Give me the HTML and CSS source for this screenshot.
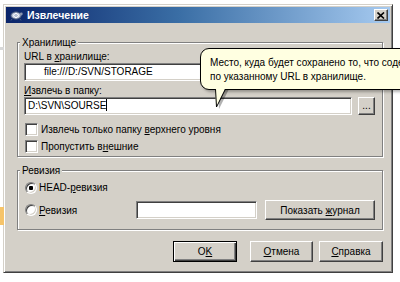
FILE: index.html
```html
<!DOCTYPE html>
<html lang="ru">
<head>
    <meta charset="UTF-8">
    <title>Извлечение</title>
    <link rel="stylesheet" href="styles.css">
</head>
<body>
    <div class="desk-line"></div>
    <div class="desk-orange"></div>

    <div class="window">
        <div class="titlebar">
            <svg class="app-icon" width="13" height="12" viewBox="0 0 13 12">
                <ellipse cx="6" cy="6.5" rx="5" ry="3.6" fill="#b8c2d6" stroke="#4a5a7a" stroke-width="1"/>
                <path d="M3 6.5 L6 4 L9 6.5 L6 9 Z" fill="none" stroke="#ffffff" stroke-width="1"/>
                <circle cx="11.3" cy="5" r="1.4" fill="#8a96b0"/>
                <path d="M2 10 L1 11.5 M10 10 L11 11.5" stroke="#4a5a7a" stroke-width="1"/>
            </svg>
            <span class="title">Извлечение</span>
            <span class="close-btn">
                <svg width="8" height="7" viewBox="0 0 8 7">
                    <path d="M0.5 0.5 L7 6.5 M7 0.5 L0.5 6.5" stroke="#000" stroke-width="1.6"/>
                </svg>
            </span>
        </div>

        <div class="dialog">
            <div class="group group-repo">
                <span class="caption">Хранилище</span>
                <div class="label">URL в <u>х</u>ранилище:</div>
                <div class="field url-field">file:///D:/SVN/STORAGE</div>
                <div class="label label-path"><u>И</u>звлечь в папку:</div>
                <div class="path-row">
                    <div class="field path-field">D:\SVN\SOURSE<span class="caret"></span></div>
                    <div class="btn browse-btn"><span>...</span></div>
                </div>
                <div class="check-row check-first">
                    <span class="checkbox"></span>
                    <span>Извлечь только папку <u>в</u>ерхнего уровня</span>
                </div>
                <div class="check-row">
                    <span class="checkbox"></span>
                    <span>Пропустить в<u>н</u>ешние</span>
                </div>
            </div>

            <div class="group group-rev">
                <span class="caption">Ревизия</span>
                <div class="radio-row">
                    <span class="radio checked"></span>
                    <span>HEAD-<u>р</u>евизия</span>
                </div>
                <div class="rev-row">
                    <div class="rev-label">
                        <span class="radio"></span>
                        <span><u>Р</u>евизия</span>
                    </div>
                    <div class="field rev-field"></div>
                    <div class="btn log-btn"><span>Показать <u>ж</u>урнал</span></div>
                </div>
            </div>

            <div class="buttons">
                <div class="btn btn-default"><span>O<u>K</u></span></div>
                <div class="btn btn-cancel"><span><u>О</u>тмена</span></div>
                <div class="btn btn-help"><span><u>С</u>правка</span></div>
            </div>
        </div>
    </div>

    <div class="balloon">
        Место, куда будет сохранено то, что содержится<br>
        по указанному URL в хранилище.
        <svg class="balloon-tail" width="18" height="22" viewBox="0 0 18 22">
            <polygon points="4,0 5,20 15,0" fill="rgba(0,0,0,0.3)"/>
            <polygon points="1,0 2,18 11,0" fill="#ffffe1"/>
            <polyline points="1.5,0 2.5,18 11.5,0" fill="none" stroke="#000" stroke-width="1"/>
        </svg>
    </div>
</body>
</html>
```

FILE: styles.css
```css
body {
    margin: 0;
    padding: 0;
    width: 400px;
    height: 282px;
    overflow: hidden;
    position: relative;
    background-color: #fff;
    font-family: "Liberation Sans", Arial, sans-serif;
    font-size: 10px;
    color: #000;
}

u {
    text-decoration: underline;
    text-underline-offset: 1px;
}

/* bits of the window behind the dialog */
.desk-line {
    position: absolute;
    left: 0;
    top: 47px;
    width: 4px;
    height: 3px;
    background-color: #d8d8d8;
}

.desk-orange {
    position: absolute;
    left: 0;
    top: 207px;
    width: 4px;
    height: 18px;
    background-color: #f6c46a;
}

.window {
    margin: 4px 0 0 3px;
    width: 390px;
    height: 269px;
    box-sizing: border-box;
    padding: 2px;
    background-color: #d4d0c8;
    border: 1px solid;
    border-color: #d4d0c8 #404040 #404040 #d4d0c8;
    box-shadow: inset 1px 1px #fff, inset -1px -1px #808080;
}

.titlebar {
    height: 16px;
    display: flex;
    align-items: center;
    padding: 0 2px 0 4px;
    background: linear-gradient(to right, #0a246a, #3a6ea5 45%, #a6caf0);
    color: #fff;
}

.app-icon {
    margin-right: 4px;
}

.title {
    flex: 1;
    font-weight: bold;
    font-size: 10.5px;
}

.close-btn {
    width: 14px;
    height: 12px;
    box-sizing: border-box;
    display: flex;
    align-items: center;
    justify-content: center;
    background-color: #d4d0c8;
    border: 1px solid;
    border-color: #fff #404040 #404040 #fff;
    box-shadow: inset -1px -1px #808080;
}

.dialog {
    padding: 0 7px 0 11px;
}

.group {
    box-sizing: border-box;
    border: 1px solid #808080;
    box-shadow: inset 1px 1px #fff, 1px 1px #fff;
    padding: 0 7px 0 6px;
}

.caption {
    display: block;
    width: fit-content;
    margin: -7px 0 0 -4px;
    padding: 0 2px;
    line-height: 13px;
    background-color: #d4d0c8;
}

.group-repo {
    margin-top: 19px;
    height: 115px;
}

.group-rev {
    margin-top: 13px;
    height: 60px;
}

.label {
    line-height: 13px;
    margin-top: 1px;
}

.label-path {
    margin-top: 3px;
}

.field {
    height: 18px;
    box-sizing: border-box;
    background-color: #fff;
    border: 1px solid;
    border-color: #808080 #fff #fff #808080;
    box-shadow: inset 1px 1px #404040, inset -1px -1px #d4d0c8;
    line-height: 16px;
    padding-left: 3px;
    white-space: nowrap;
    overflow: hidden;
}

.url-field {
    padding-left: 19px;
}

.path-row {
    display: flex;
    gap: 6px;
}

.path-field {
    flex: 1;
}

.caret {
    display: inline-block;
    width: 1px;
    height: 12px;
    background-color: #000;
    vertical-align: -2px;
}

.btn {
    box-sizing: border-box;
    display: flex;
    align-items: center;
    justify-content: center;
    background-color: #d4d0c8;
    border: 1px solid;
    border-color: #fff #404040 #404040 #fff;
    box-shadow: inset -1px -1px #808080;
    white-space: nowrap;
}

.browse-btn {
    width: 17px;
    height: 18px;
    padding-bottom: 2px;
}

.check-row,
.radio-row {
    display: flex;
    align-items: center;
    gap: 3px;
    height: 13px;
    line-height: 13px;
    padding-left: 1px;
}

.check-first {
    margin-top: 8px;
}

.check-row + .check-row {
    margin-top: 4px;
}

.checkbox {
    width: 13px;
    height: 13px;
    box-sizing: border-box;
    background-color: #fff;
    border: 1px solid;
    border-color: #808080 #fff #fff #808080;
    box-shadow: inset 1px 1px #404040, inset -1px -1px #d4d0c8;
}

.radio {
    width: 12px;
    height: 12px;
    box-sizing: border-box;
    border-radius: 50%;
    background-color: #fff;
    border: 1px solid;
    border-color: #808080 #fff #fff #808080;
    box-shadow: inset 1px 1px #404040, inset -1px -1px #d4d0c8;
}

.radio.checked {
    background: radial-gradient(circle, #000 0 2px, #fff 2.5px);
}

.radio-row {
    margin-top: 4px;
    gap: 2px;
}

.rev-row {
    display: flex;
    align-items: center;
    height: 20px;
    margin-top: 6px;
}

.rev-label {
    width: 112px;
    display: flex;
    align-items: center;
    gap: 2px;
    padding-left: 1px;
    box-sizing: border-box;
}

.rev-field {
    width: 121px;
}

.log-btn {
    width: 110px;
    height: 20px;
    margin-left: 8px;
}

.buttons {
    display: flex;
    justify-content: flex-end;
    margin-top: 11px;
}

.buttons .btn {
    height: 21px;
}

.btn-default {
    width: 64px;
    border-color: #000;
    box-shadow: inset 1px 1px #fff, inset -1px -1px #404040, inset -2px -2px #808080;
}

.btn-cancel {
    width: 63px;
    margin-left: 13px;
}

.btn-help {
    width: 64px;
    margin-left: 6px;
}

.balloon {
    position: absolute;
    left: 200px;
    top: 48px;
    width: 240px;
    height: 42px;
    box-sizing: border-box;
    padding: 7px 0 0 9px;
    line-height: 14px;
    white-space: nowrap;
    background-color: #ffffe1;
    border: 1px solid #000;
    border-radius: 9px;
    box-shadow: 2px 2px 3px rgba(0, 0, 0, 0.3);
}

.balloon-tail {
    position: absolute;
    left: 13px;
    top: 40px;
}
```
